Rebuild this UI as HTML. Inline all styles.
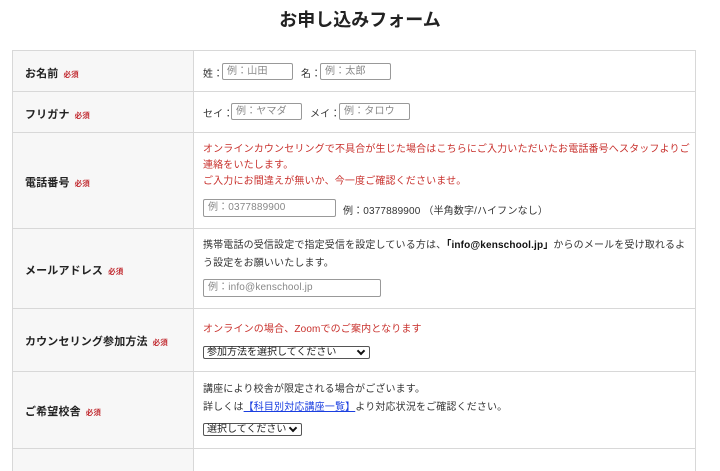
<!DOCTYPE html>
<html><head><meta charset="utf-8"><style>
body{margin:0;width:720px;height:462px;overflow:hidden;background:#fff;font-family:"Liberation Sans","Noto Sans CJK JP",sans-serif;color:#333;font-size:10px;letter-spacing:.15px}
.a{position:absolute;white-space:nowrap}
h1{position:absolute;top:6px;left:0;width:720px;text-align:center;font-size:18px;margin:0;font-weight:bold;color:#222;letter-spacing:0}
.tbl{position:absolute;left:12px;top:50px;width:682px;height:420px;border:1px solid #d8d8d8;border-bottom:none}
.lab{position:absolute;left:0;width:180px;background:#f7f7f7;border-right:1px solid #d8d8d8}
.hr{position:absolute;left:0;width:682px;height:1px;background:#d8d8d8}
.lt{position:absolute;left:12px;font-weight:bold;font-size:11px;color:#222;white-space:nowrap}
.req{color:#c0262c;font-size:7.5px;font-weight:bold;margin-left:5px}
.in{position:absolute;border:1px solid #999;border-radius:2px;box-sizing:border-box;height:17px;color:#888;font-size:10px;line-height:15px;padding-left:4px;background:#fff}
.sel{position:absolute;border:1px solid #555;border-radius:2px;height:13px;box-sizing:border-box;font-size:10px;line-height:11px;padding-left:3px;color:#222;background:#fff;letter-spacing:0}
.sel:after{content:"";position:absolute;right:5px;top:1px;width:4px;height:4px;border-right:2px solid #111;border-bottom:2px solid #111;transform:rotate(45deg)}
.red{color:#c8302c}
</style></head><body>
<h1>お申し込みフォーム</h1>
<div class="tbl">
<div class="lab" style="top:0;height:420px"></div>
<div class="hr" style="top:40px"></div>
<div class="hr" style="top:81px"></div>
<div class="hr" style="top:177px"></div>
<div class="hr" style="top:257px"></div>
<div class="hr" style="top:320px"></div>
<div class="hr" style="top:397px"></div>
<div class="lt" style="top:14px">お名前<span class="req">必須</span></div>
<div class="lt" style="top:55px">フリガナ<span class="req">必須</span></div>
<div class="lt" style="top:123px">電話番号<span class="req">必須</span></div>
<div class="lt" style="top:211px">メールアドレス<span class="req">必須</span></div>
<div class="lt" style="top:282px">カウンセリング参加方法<span class="req">必須</span></div>
<div class="lt" style="top:352px">ご希望校舎<span class="req">必須</span></div>
</div>
<div class="a" style="left:203px;top:65px">姓：</div>
<div class="in" style="left:222px;top:63px;width:71px">例：山田</div>
<div class="a" style="left:301px;top:65px">名：</div>
<div class="in" style="left:320px;top:63px;width:71px">例：太郎</div>
<div class="a" style="left:203px;top:105px">セイ：</div>
<div class="in" style="left:231px;top:103px;width:71px">例：ヤマダ</div>
<div class="a" style="left:310px;top:105px">メイ：</div>
<div class="in" style="left:339px;top:103px;width:71px">例：タロウ</div>
<div class="a red" style="left:203px;top:142px;line-height:16px">オンラインカウンセリングで不具合が生じた場合はこちらにご入力いただいたお電話番号へスタッフよりご<br>連絡をいたします。<br>ご入力にお間違えが無いか、今一度ご確認くださいませ。</div>
<div class="in" style="left:203px;top:199px;width:133px;height:18px;line-height:16px">例：0377889900</div>
<div class="a" style="left:343px;top:202px">例：0377889900 （半角数字/ハイフンなし）</div>
<div class="a" style="left:203px;top:237px;line-height:18px">携帯電話の受信設定で指定受信を設定している方は、<b style="color:#111">「info@kenschool.jp」</b>からのメールを受け取れるよ<br>う設定をお願いいたします。</div>
<div class="in" style="left:203px;top:279px;width:178px;height:18px;line-height:16px">例：info@kenschool.jp</div>
<div class="a red" style="left:203px;top:320px">オンラインの場合、Zoomでのご案内となります</div>
<div class="sel" style="left:203px;top:346px;width:167px">参加方法を選択してください</div>
<div class="a" style="left:203px;top:381px;line-height:18px">講座により校舎が限定される場合がございます。<br>詳しくは<span style="color:#1a3ee0;text-decoration:underline">【科目別対応講座一覧】</span>より対応状況をご確認ください。</div>
<div class="sel" style="left:203px;top:423px;width:99px">選択してください</div>
</body></html>
